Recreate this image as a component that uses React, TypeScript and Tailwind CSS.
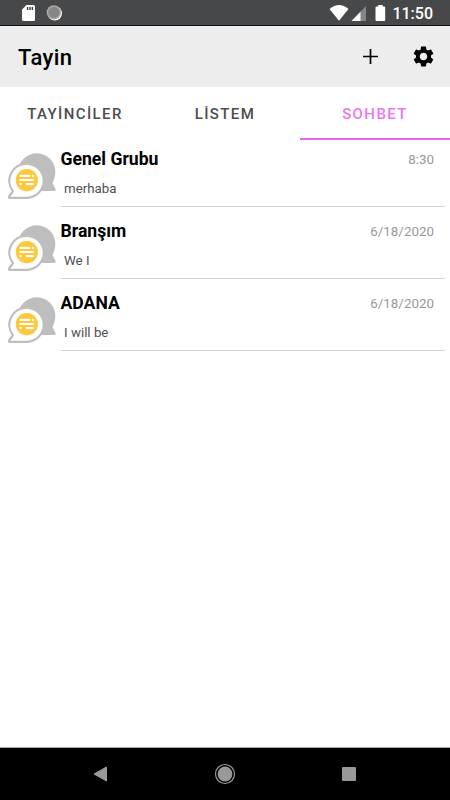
import { clsx } from "clsx";

type Chat = {
  name: string;
  message: string;
  date: string;
};

const tabs = ["TAYİNCİLER", "LİSTEM", "SOHBET"];

const chats: Chat[] = [
  { name: "Genel Grubu", message: "merhaba", date: "8:30" },
  { name: "Branşım", message: "We I", date: "6/18/2020" },
  { name: "ADANA", message: "I will be", date: "6/18/2020" },
];

function StatusBar(): React.ReactElement {
  return (
    <div className="flex h-[26px] shrink-0 items-center justify-between border-b border-[#0e1216] bg-[#474849] pt-px pr-[17px] pl-[21px] text-white">
      <div className="flex items-center gap-[11px]">
        <svg width="14" height="17" viewBox="0 0 14 17">
          <path d="M5.5 0H12.5Q14 0 14 1.5V14.5Q14 16 12.5 16H2.5Q1 16 1 14.5V4.5Z" fill="#fff" />
          <path d="M6.6 2V5M9 2V5M11.4 2V5" stroke="#3a3b3c" strokeWidth="1.4" />
        </svg>
        <svg width="16" height="16" viewBox="0 0 16 16">
          <circle cx="8.8" cy="8.4" r="7.2" fill="#fff" />
          <circle cx="7.9" cy="7.4" r="7.2" fill="#aaa" />
          <circle cx="7.9" cy="7.4" r="5.6" fill="#868686" stroke="#999" strokeDasharray="1 1" />
        </svg>
      </div>
      <div className="flex items-center">
        <svg width="64" height="18" viewBox="0 0 64 18">
          <path d="M1.5 5Q11 -3 20.5 5L11 16.8Z" fill="#fff" />
          <path d="M38 2V17H23.5Z" fill="#858585" />
          <path d="M32.5 7.7V17H23.5Z" fill="#fff" />
          <path d="M50.2 1H54.7V2.6H56.3Q57.2 2.6 57.2 3.5V16Q57.2 17 56.3 17H48.5Q47.5 17 47.5 16V3.5Q47.5 2.6 48.5 2.6H50.2Z" fill="#fff" />
        </svg>
        <span className="pt-[2px] text-[16px] leading-none font-medium">11:50</span>
      </div>
    </div>
  );
}

function GearIcon(): React.ReactElement {
  return (
    <svg width="25" height="25" viewBox="0 0 24 24" fill="#000">
      <path d="M19.14 12.94c.04-.3.06-.61.06-.94 0-.32-.02-.64-.07-.94l2.03-1.58c.18-.14.23-.41.12-.61l-1.92-3.32c-.12-.22-.37-.29-.59-.22l-2.39.96c-.5-.38-1.03-.7-1.62-.94l-.36-2.54c-.04-.24-.24-.41-.48-.41h-3.84c-.24 0-.43.17-.47.41l-.36 2.54c-.59.24-1.13.57-1.62.94l-2.39-.96c-.22-.08-.47 0-.59.22L2.74 8.87c-.12.21-.08.47.12.61l2.03 1.58c-.05.3-.09.63-.09.94s.02.64.07.94l-2.03 1.58c-.18.14-.23.41-.12.61l1.92 3.32c.12.22.37.29.59.22l2.39-.96c.5.38 1.03.7 1.62.94l.36 2.54c.05.24.24.41.48.41h3.84c.24 0 .44-.17.47-.41l.36-2.54c.59-.24 1.13-.56 1.62-.94l2.39.96c.22.08.47 0 .59-.22l1.92-3.32c.12-.22.07-.47-.12-.61zM12 15.6c-1.98 0-3.6-1.62-3.6-3.6s1.62-3.6 3.6-3.6 3.6 1.62 3.6 3.6-1.62 3.6-3.6 3.6" />
    </svg>
  );
}

function ChatIcon(): React.ReactElement {
  return (
    <svg width="48" height="47" viewBox="0 0 48 47">
      <path
        d="M29 0.2A18.5 18.5 0 0 1 47.3 18.7C47.3 23.2 46 27 44.5 30L47.6 36Q48 38 46 38H29A18.8 18.8 0 0 1 29 0.2Z"
        fill="#bebebe"
      />
      <path
        d="M18.7 10.8A16.9 16.9 0 1 1 18.7 44.8H1.5Q0.5 44.7 1.1 43.5L5 38.2A16.9 16.9 0 0 1 18.7 10.8Z"
        fill="#fff"
        stroke="#bebebe"
        strokeWidth="2.2"
        strokeLinejoin="round"
      />
      <circle cx="18.8" cy="27.1" r="11.1" fill="#fdc93a" />
      <path
        d="M12.5 22.9H21.2M24.6 22.9H25M12.5 27H25M12.5 31.1H12.9M18.6 31.1H25"
        stroke="#fff"
        strokeWidth="2.2"
        strokeLinecap="round"
      />
    </svg>
  );
}

function ChatRow({ chat }: { chat: Chat }): React.ReactElement {
  return (
    <li className="flex h-[67px] pr-[5px] pl-2">
      <div className="mt-[13px] w-[53px] shrink-0">
        <ChatIcon />
      </div>
      <div className="flex-1 border-b border-[#d3d3d3] pt-[7px]">
        <div className="flex items-center justify-between pr-[11px]">
          <span className="-ml-[0.5px] pt-px text-[17.6px] leading-[22px] font-bold text-black">{chat.name}</span>
          <span className="pt-px text-[13.4px] leading-[19px] text-[#999]">{chat.date}</span>
        </div>
        <p className="mt-[10px] pl-[3px] text-[13.3px] leading-[18px] text-[#505050]">{chat.message}</p>
      </div>
    </li>
  );
}

export default function App(): React.ReactElement {
  return (
    <div className="flex h-[800px] w-[450px] flex-col overflow-hidden bg-white font-['Roboto',sans-serif]">
      <StatusBar />
      <header className="flex h-[61px] shrink-0 items-center justify-between bg-[#ededed] pr-[14px] pl-[18px]">
        <h1 className="pt-[3px] text-[22px] leading-none font-medium tracking-[0.4px] text-black">Tayin</h1>
        <div className="flex items-center gap-[32px]">
          <button type="button" aria-label="Ekle">
            <svg width="17" height="17" viewBox="0 0 17 17">
              <path d="M8.5 1V16M1 8.5H16" stroke="#000" strokeWidth="1.7" />
            </svg>
          </button>
          <button type="button" aria-label="Ayarlar">
            <GearIcon />
          </button>
        </div>
      </header>
      <nav className="grid h-[53px] shrink-0 grid-cols-3">
        {tabs.map((tab) => (
          <button
            key={tab}
            type="button"
            className={clsx(
              "border-b-2 pt-[3px] text-[15px] font-medium tracking-[1.4px]",
              tab === "SOHBET" ? "border-[#e667e8] text-[#ed75ef]" : "border-transparent text-[#4d4d4d]",
            )}
          >
            {tab}
          </button>
        ))}
      </nav>
      <ul className="flex flex-1 flex-col gap-[5px]">
        {chats.map((chat) => (
          <ChatRow key={chat.name} chat={chat} />
        ))}
      </ul>
      <div className="grid h-[53px] shrink-0 grid-cols-[200px_50px_200px] items-center border-t border-[#aaa] bg-black">
        <svg className="ml-[93px]" width="15" height="16" viewBox="0 0 15 16">
          <path d="M13.5 1V15L1 8Z" fill="#999" stroke="#999" strokeLinejoin="round" />
        </svg>
        <svg className="mx-auto" width="22" height="22" viewBox="0 0 22 22">
          <circle cx="11" cy="11" r="9.5" fill="none" stroke="#999" strokeWidth="1.2" />
          <circle cx="11" cy="11" r="7.4" fill="#999" />
        </svg>
        <div className="ml-[92px] size-[14px] rounded-[1px] bg-[#999]" />
      </div>
    </div>
  );
}
